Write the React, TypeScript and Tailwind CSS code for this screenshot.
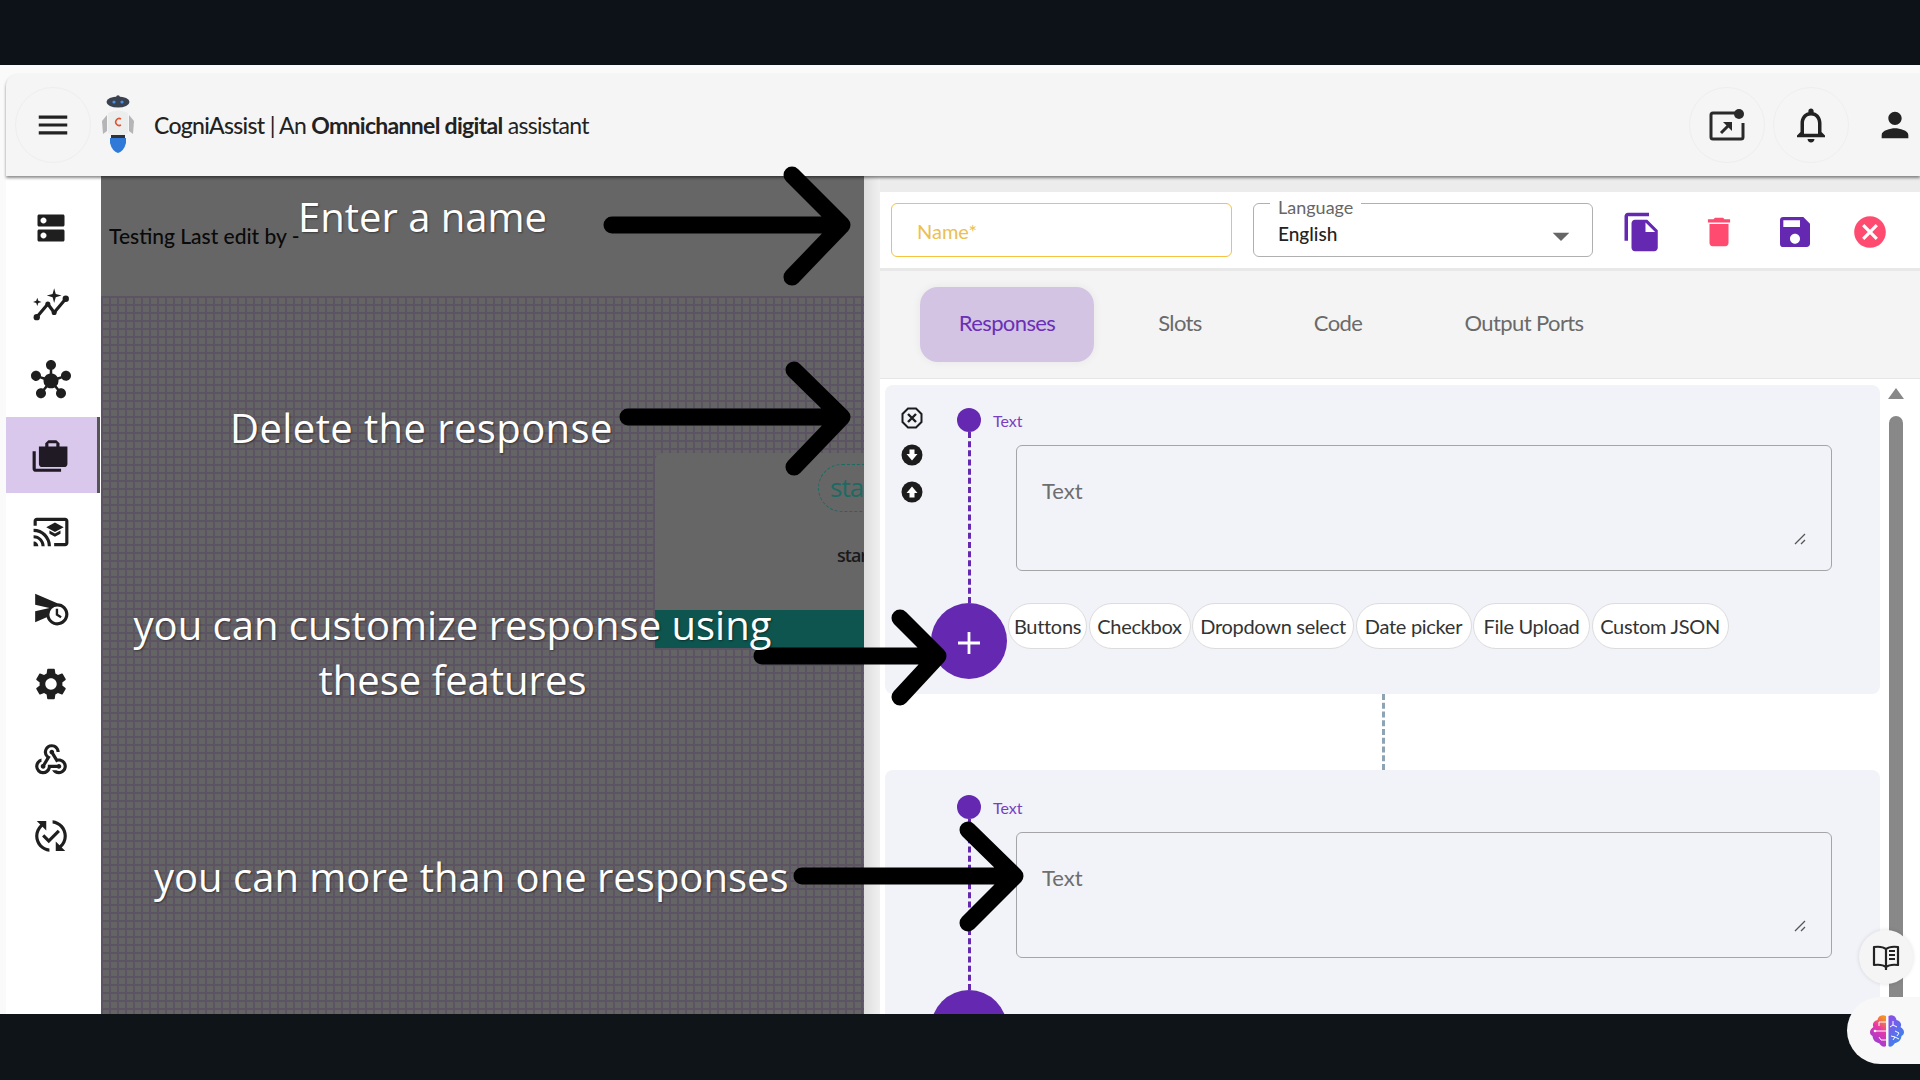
import React from "react";
import {
  MdMenu, MdDns, MdHub, MdCastForEducation, MdScheduleSend, MdSettings,
  MdWebhook, MdPublishedWithChanges, MdOutlineNotifications, MdPerson, MdFileCopy, MdDelete, MdSave,
  MdCancel, MdArrowDropDown,
} from "react-icons/md";

const jost = "font-['Lato','Liberation_Sans',sans-serif]";

function Robot() {
  return (
    <svg viewBox="0 0 36 60" className="w-[36px] h-[60px] shrink-0">
      <circle cx="18" cy="2" r="1.8" fill="#3b4250" />
      <ellipse cx="18" cy="7" rx="11.5" ry="5.5" fill="#3a4150" />
      <circle cx="14" cy="7" r="1.6" fill="#4a90e2" />
      <circle cx="22" cy="7" r="1.6" fill="#4a90e2" />
      <path d="M8 18 Q18 13 28 18 L28 38 Q18 44 8 38 Z" fill="#eceded" />
      <path d="M2 26 L7 20 L7 36 L3 39 Z" fill="#b5b5b8" />
      <path d="M34 26 L29 20 L29 36 L33 39 Z" fill="#b5b5b8" />
      <path d="M21 24 A3.5 3.5 0 1 0 21 30" fill="none" stroke="#e0552f" strokeWidth="1.5" />
      <path d="M11 40 H25 V43 H11 Z" fill="#2d323b" />
      <path d="M10 43 H26 V48 Q24 56 18 58 Q12 56 10 48 Z" fill="#2f7ad9" />
    </svg>
  );
}

function PipIcon() {
  return (
    <svg viewBox="0 0 36 36" className="w-[36px] h-[36px]">
      <path d="M26 6 H4 Q2 6 2 8 V30 Q2 32 4 32 H32 Q34 32 34 30 V16" fill="none" stroke="#2a2a2a" strokeWidth="3" />
      <circle cx="30" cy="7" r="5" fill="#2a2a2a" />
      <path d="M12 26 L19 19" stroke="#2a2a2a" strokeWidth="3" />
      <path d="M14 15 H23 V24 Z" fill="#2a2a2a" />
    </svg>
  );
}

function CasesIcon() {
  return (
    <svg viewBox="0 0 24 24" className="w-[38px] h-[38px]">
      <path
        fill="#1f1a24"
        fillRule="evenodd"
        d="M18 6V4l-2-2h-5L9 4v2H5v11c0 1.1.9 2 2 2h14c1.1 0 2-.9 2-2V6h-5zM16 6h-5V4h5v2zM3 9H1v11c0 1.1.9 2 2 2h16v-2H3V9z"
      />
    </svg>
  );
}

function GraphIcon() {
  return (
    <svg viewBox="0 0 36 36" className="w-[38px] h-[38px]">
      <path d="M4 31 L15 18 L21 26 L32 13" fill="none" stroke="#1f1f1f" strokeWidth="3" strokeLinejoin="round" />
      <circle cx="4.5" cy="30.5" r="3" fill="#1f1f1f" />
      <circle cx="15" cy="18" r="2.4" fill="#1f1f1f" />
      <circle cx="21" cy="26" r="2.4" fill="#1f1f1f" />
      <circle cx="32" cy="13" r="3" fill="#1f1f1f" />
      <path d="M5 12 L6 15 L9 16 L6 17 L5 20 L4 17 L1 16 L4 15 Z" fill="#1f1f1f" />
      <path d="M21 3 L22.5 8.5 L28 10 L22.5 11.5 L21 17 L19.5 11.5 L14 10 L19.5 8.5 Z" fill="#1f1f1f" />
    </svg>
  );
}

function BookIcon() {
  return (
    <svg viewBox="0 0 28 28" className="w-[28px] h-[28px]">
      <path d="M14 6 C11 3.5 6 3.5 2 4 V22 C6 21.5 11 21.5 14 24 C17 21.5 22 21.5 26 22 V4 C22 3.5 17 3.5 14 6 Z" fill="none" stroke="#222" strokeWidth="2.2" strokeLinejoin="round" />
      <path d="M14 6 V27" stroke="#222" strokeWidth="2.2" />
      <path d="M17 8 H23 M17 12 H23 M17 16 H23" stroke="#222" strokeWidth="2.2" />
    </svg>
  );
}

function OctX() {
  return (
    <svg viewBox="0 0 22 22" className="w-[22px] h-[22px]">
      <path d="M7 1.5 H15 L20.5 7 V15 L15 20.5 H7 L1.5 15 V7 Z" fill="none" stroke="#1c1c1c" strokeWidth="2" />
      <path d="M7 7 L15 15 M15 7 L7 15" stroke="#1c1c1c" strokeWidth="2.4" />
    </svg>
  );
}

function RoundDown() {
  return (
    <svg viewBox="0 0 22 22" className="w-[22px] h-[22px]">
      <circle cx="11" cy="11" r="10.5" fill="#1c1c1c" />
      <path d="M8.5 5.5 H13.5 V10 H16.5 L11 16.5 L5.5 10 H8.5 Z" fill="#fff" />
    </svg>
  );
}

function RoundUp() {
  return (
    <svg viewBox="0 0 22 22" className="w-[22px] h-[22px]">
      <circle cx="11" cy="11" r="10.5" fill="#1c1c1c" />
      <path d="M8.5 16.5 H13.5 V12 H16.5 L11 5.5 L5.5 12 H8.5 Z" fill="#fff" />
    </svg>
  );
}

function Brain() {
  return (
    <svg viewBox="0 0 36 36" className="w-[36px] h-[36px]">
      <defs>
        <linearGradient id="brainL" x1="0.7" y1="0" x2="0.3" y2="1">
          <stop offset="0" stopColor="#f7941d" />
          <stop offset="0.4" stopColor="#e936a7" />
          <stop offset="1" stopColor="#8a3fe0" />
        </linearGradient>
        <linearGradient id="brainR" x1="0.2" y1="0" x2="0.8" y2="1">
          <stop offset="0" stopColor="#8a4fe8" />
          <stop offset="1" stopColor="#2f8cf0" />
        </linearGradient>
      </defs>
      <path d="M17 3 C13 1 9 3 8.5 7 C4 8 3 12 4.5 14 C0 17 0 21 3.5 23 C4 28 8 30 10 30 C12 33 15 35 17 33 Z" fill="url(#brainL)" />
      <path d="M19.5 3 C23 1 27 3 27.5 7 C32 8 33 12 31.5 14 C36 17 36 21 32.5 23 C32 28 28 30 26 30 C24 33 21 35 19.5 33 Z" fill="url(#brainR)" />
      <path d="M17 9 H10 V13 M17 18 H6 M17 27 H12 L10 24" fill="none" stroke="#fff" strokeWidth="1" />
      <circle cx="6" cy="18" r="1.3" fill="#fff" />
      <path d="M24 8 L24 12 L28 14 M24 12 L21 14 M26 18 L30 20 L28 23 M24 27 L26 24 L30 26 M26 24 L22 23" fill="none" stroke="#fff" strokeWidth="1" />
    </svg>
  );
}

function ResizeGrip() {
  return (
    <svg viewBox="0 0 12 12" className="absolute right-[25px] bottom-[25px] w-[12px] h-[12px]">
      <path d="M1 11 L11 1 M7 11 L11 7" stroke="#555" strokeWidth="1.3" />
    </svg>
  );
}

function Response({ top, actions }: { top: string; actions: boolean }) {
  return (
    <div className={`flex shrink-0 bg-[#f1f3f8] rounded-lg w-[995px] ${top}`}>
      <div className="w-[16px] shrink-0" />
      <div className="w-[22px] shrink-0 flex flex-col items-center gap-[15px] mt-[-1px]">
        {actions && (
          <>
            <OctX />
            <RoundDown />
            <RoundUp />
          </>
        )}
      </div>
      <div className="relative w-[76px] h-[271px] ml-[8px] shrink-0 flex flex-col items-center">
        <div className="w-[24px] h-[24px] rounded-full bg-[#6429b0] shrink-0" />
        <div className="flex-1 border-l-[3px] border-dashed border-[#6429b0]" />
        <div className="w-[76px] h-[76px] rounded-full bg-[#6429b0] shrink-0 flex items-center justify-center">
          <svg viewBox="0 0 24 24" className="mt-[3px] w-[24px] h-[24px]">
            <path d="M12 1 V23 M1 12 H23" stroke="#fff" strokeWidth="2.8" />
          </svg>
        </div>
        <span className={`absolute left-[62px] top-[1px] text-[16px] leading-[24px] text-[#7a3fc0] ${jost}`}>Text</span>
      </div>
      <div className="ml-[1px] flex flex-col">
        <div className={`relative mt-[37px] ml-[8px] w-[816px] h-[126px] border-[1.5px] border-[#a5a5a8] rounded-md pl-[25px] pt-[29px] text-[22px] leading-[32px] text-[#6e6e6e] ${jost}`}>
          Text
          <ResizeGrip />
        </div>
        {actions && (
          <div className={`mt-[32px] flex gap-[1.5px] text-[20px] tracking-[-0.3px] text-[#333] ${jost}`}>
            <span className="w-[79px] h-[46px] bg-white border border-[#dcdcdc] rounded-full flex items-center justify-center">Buttons</span>
            <span className="w-[102px] h-[46px] bg-white border border-[#dcdcdc] rounded-full flex items-center justify-center">Checkbox</span>
            <span className="w-[162px] h-[46px] bg-white border border-[#dcdcdc] rounded-full flex items-center justify-center">Dropdown select</span>
            <span className="w-[116px] h-[46px] bg-white border border-[#dcdcdc] rounded-full flex items-center justify-center">Date picker</span>
            <span className="w-[117px] h-[46px] bg-white border border-[#dcdcdc] rounded-full flex items-center justify-center">File Upload</span>
            <span className="w-[137px] h-[46px] bg-white border border-[#dcdcdc] rounded-full flex items-center justify-center">Custom JSON</span>
          </div>
        )}
      </div>
    </div>
  );
}

export default function App() {
  const anno = "absolute z-20 font-['Open_Sans','Noto_Sans',sans-serif] text-white text-center whitespace-nowrap [text-shadow:1px_1px_2px_rgba(0,0,0,0.45)]";
  return (
    <div className="relative w-[1920px] h-[1080px] overflow-hidden flex flex-col bg-[#0c1218]">
      <div className="h-[65px] shrink-0 bg-[#0c1218]" />
      <div className="h-[949px] shrink-0 flex flex-col overflow-hidden bg-[#fafafa]">
        <header className="relative ml-[6px] mt-[9px] h-[102px] shrink-0 flex items-center rounded-tl-xl bg-[#f5f5f5] shadow-[0_2px_3px_rgba(0,0,0,0.45)] z-10 overflow-hidden">
          <div className="ml-[9px] w-[76px] h-[76px] rounded-full border border-[#eeeeee] flex items-center justify-center shrink-0">
            <MdMenu className="w-[38px] h-[38px] text-[#222]" />
          </div>
          <div className="ml-[9px]"><Robot /></div>
          <div className={`ml-[18px] text-[23px] text-[#222] tracking-[-0.7px] whitespace-nowrap ${jost}`}>
            <span className="font-medium">CogniAssist</span> | An <span className="font-bold">Omnichannel digital</span> assistant
          </div>
          <div className="ml-auto mr-[-13px] flex gap-[8px] shrink-0">
            <div className="w-[76px] h-[76px] rounded-full border border-[#eeeeee] flex items-center justify-center"><PipIcon /></div>
            <div className="w-[76px] h-[76px] rounded-full border border-[#eeeeee] flex items-center justify-center"><MdOutlineNotifications className="w-[42px] h-[42px] text-[#222]" /></div>
            <div className="w-[76px] h-[76px] rounded-full flex items-center justify-center"><MdPerson className="w-[40px] h-[40px] text-[#222]" /></div>
          </div>
        </header>

        <div className="flex flex-1 min-h-0 ml-[6px]">
          <nav className="w-[95px] shrink-0 bg-white pt-[13px] text-[#1f1f1f]">
            <div className="h-[76px] pt-[2px] flex items-center justify-center pr-[6px]"><MdDns className="w-[36px] h-[36px]" /></div>
            <div className="h-[76px] pt-[2px] flex items-center justify-center pr-[6px]"><GraphIcon /></div>
            <div className="h-[76px] pt-[2px] flex items-center justify-center pr-[6px]"><MdHub className="w-[40px] h-[40px]" /></div>
            <div className="h-[76px] pt-[2px] flex items-center justify-center pr-[3px] bg-[#d9c8eb] border-r-[3px] border-[#555] mr-[1px]"><CasesIcon /></div>
            <div className="h-[76px] pt-[2px] flex items-center justify-center pr-[6px]"><MdCastForEducation className="w-[38px] h-[38px]" /></div>
            <div className="h-[76px] pt-[2px] flex items-center justify-center pr-[6px]"><MdScheduleSend className="w-[38px] h-[38px]" /></div>
            <div className="h-[76px] pt-[2px] flex items-center justify-center pr-[6px]"><MdSettings className="w-[38px] h-[38px]" /></div>
            <div className="h-[76px] pt-[2px] flex items-center justify-center pr-[6px]"><MdWebhook className="w-[38px] h-[38px]" /></div>
            <div className="h-[76px] pt-[2px] flex items-center justify-center pr-[6px]"><MdPublishedWithChanges className="w-[38px] h-[38px]" /></div>
          </nav>

          <main className="relative w-[763px] shrink-0 flex flex-col overflow-hidden">
            <div className="h-[120px] shrink-0 bg-[#666666] flex items-center pl-[8px]">
              <span className={`text-[21px] font-medium text-[#0a0a0a] ${jost}`}>Testing Last edit by -</span>
            </div>
            <div className="flex-1 bg-[#646464] bg-[linear-gradient(#5c5463_2px,transparent_2px),linear-gradient(90deg,#5c5463_2px,transparent_2px)] bg-[size:8px_8px]" />
            <div className="absolute left-[554px] top-[277px] w-[300px] h-[195px] rounded-t-lg bg-[#666666] flex flex-col">
              <div className="h-[157px] shrink-0 relative">
                <div className="absolute left-[163px] top-[11px] w-[120px] h-[48px] rounded-full border border-dashed border-[#1d6a62] pl-[11px] text-[26px] tracking-[-1px] leading-[44px] text-[#1d6a62] font-['Open_Sans',sans-serif]">start</div>
                <div className="absolute left-[182px] top-[89px] text-[18px] font-semibold tracking-[-1px] text-[#1a1a1a] font-['Open_Sans',sans-serif]">start</div>
              </div>
              <div className="h-[38px] bg-[#0e554f]" />
            </div>
          </main>

          <section className="flex-1 flex min-w-0 bg-[#ececec] relative">
            <div className="w-[16px] shrink-0 bg-[linear-gradient(90deg,#dedede,#f0f0f0)]" />
            <div className="flex-1 flex flex-col min-w-0 pt-[16px] overflow-hidden">
              <div className="h-[76px] shrink-0 bg-white flex items-center pl-[11px] border-b-[3px] border-[#e8e8e8] box-content">
                <div className={`w-[341px] h-[54px] border-[1.5px] border-[#f5c242] rounded-md flex items-center pl-[25px] pt-[1px] text-[20px] text-[#ecc04f] ${jost}`}>Name*</div>
                <div className={`relative ml-[21px] w-[340px] h-[54px] border-[1.5px] border-[#b0b0b0] rounded-md flex items-center pl-[24px] pt-[9px] text-[19px] font-medium text-[#222] ${jost}`}>
                  <span className="absolute left-[16px] top-[-7px] bg-white px-[8px] text-[18px] leading-[20px] font-normal text-[#666]">Language</span>
                  English
                  <MdArrowDropDown className="absolute right-[11px] top-[12px] w-[40px] h-[40px] text-[#666]" />
                </div>
                <MdFileCopy className="ml-[28px] mt-[4px] w-[42px] h-[42px] text-[#6429b0]" />
                <MdDelete className="ml-[37px] mt-[4px] w-[38px] h-[42px] text-[#ff4b70]" />
                <MdSave className="ml-[37px] mt-[4px] w-[40px] h-[42px] text-[#6429b0]" />
                <MdCancel className="ml-[36px] mt-[4px] w-[38px] h-[38px] text-[#ff4b70]" />
              </div>
              <div className={`h-[108px] shrink-0 bg-[#f4f4f4] border-b border-[#e6e6e6] flex items-center pb-[1px] text-[22px] tracking-[-0.6px] text-[#6a6a6a] ${jost}`}>
                <button className="ml-[40px] w-[174px] h-[75px] pb-[3px] rounded-[18px] bg-[#d3c4e4] text-[#6a2fb5] shadow-[0_0_10px_rgba(0,0,0,0.06)]">Responses</button>
                <button className="w-[172px] h-[75px] pb-[3px]">Slots</button>
                <button className="w-[144px] h-[75px] pb-[3px]">Code</button>
                <button className="ml-[8px] w-[212px] h-[75px] pb-[3px]">Output Ports</button>
              </div>
              <div className="flex-1 min-h-0 bg-white flex pt-[6px] overflow-hidden">
                <div className="pl-[5px] w-[1005px] shrink-0 flex flex-col">
                  <Response top="pt-[23px] pb-[15px]" actions />
                  <div className="h-[76px] shrink-0 w-[995px] flex justify-center">
                    <div className="mr-[-2px] h-full border-l-[3px] border-dashed border-[#8ea4b5]" />
                  </div>
                  <Response top="pt-[25px] pb-[15px]" actions={false} />
                </div>
                <div className="w-[16px] shrink-0 flex flex-col items-center ml-[3px]">
                  <div className="mt-[3px] w-0 h-0 border-l-[8px] border-r-[8px] border-b-[11px] border-l-transparent border-r-transparent border-b-[#888]" />
                  <div className="mt-[17px] w-[14px] flex-1 bg-[#888] rounded-t-full" />
                </div>
              </div>
            </div>
          </section>
        </div>
      </div>
      <div className="flex-1 bg-[#0f1419]" />

      <div className="absolute z-20 left-[1859px] top-[930px] w-[54px] h-[54px] rounded-full bg-[#f5f5f5] shadow-[0_0_4px_rgba(0,0,0,0.12)] flex items-center justify-center">
        <BookIcon />
      </div>
      <div className="absolute z-20 left-[1847px] top-[997px] w-[90px] h-[67px] rounded-l-full bg-[#f8f8f8] flex items-center pl-[22px]">
        <Brain />
      </div>

      <svg className="absolute z-20 left-0 top-0 w-[1920px] h-[1080px] pointer-events-none" viewBox="0 0 1920 1080">
        <g fill="none" stroke="#000" strokeWidth="17" strokeLinecap="round" strokeLinejoin="round">
          <path d="M612 225 H840 M792 175 L842 225 L792 277" />
          <path d="M628 417 H840 M794 370 L842 417 L794 467" />
          <path d="M762 656 H935 M900 618 L938 656 L900 697" />
          <path d="M802 876 H1012 M968 830 L1015 876 L968 923" />
        </g>
      </svg>
      <div className={`${anno} left-[298px] top-[187px] text-[40px] leading-[60px]`}>Enter a name</div>
      <div className={`${anno} left-[230px] top-[398px] text-[40px] tracking-[0.4px] leading-[60px]`}>Delete the response</div>
      <div className={`${anno} left-[132px] top-[597px] w-[641px] text-[40px] leading-[55px]`}>you can customize response using<br />these features</div>
      <div className={`${anno} left-[154px] top-[847px] text-[40px] leading-[60px]`}>you can more than one responses</div>
    </div>
  );
}
